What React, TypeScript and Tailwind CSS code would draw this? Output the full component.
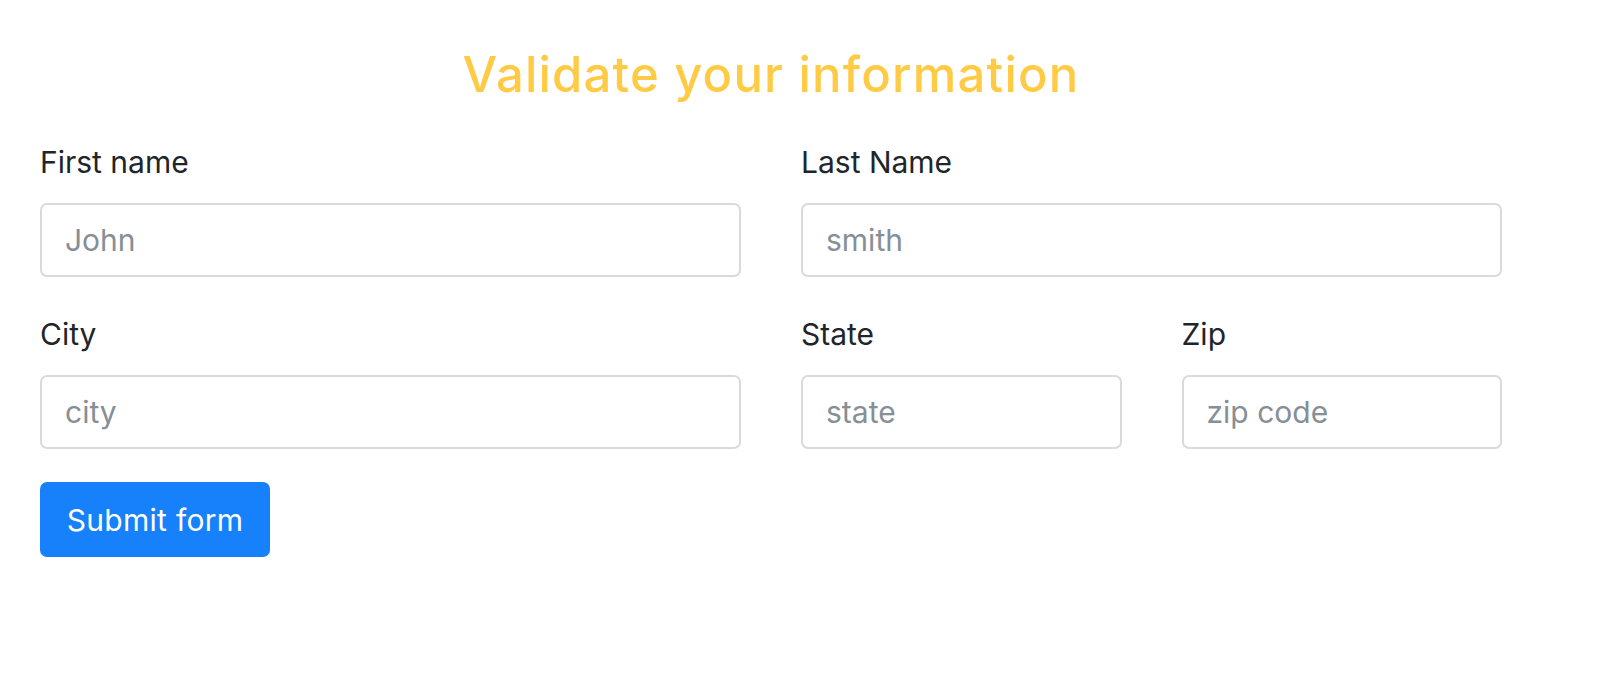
function Field({
  label,
  placeholder,
  span,
}: {
  label: string;
  placeholder: string;
  span: string;
}) {
  return (
    <div className={span}>
      <label className="block text-[30px] leading-[45px] text-[#212529] mb-[18px]">{label}</label>
      <input
        type="text"
        placeholder={placeholder}
        className="block w-full h-[74px] px-[23px] text-[30px] text-[#495057] placeholder:text-[#868e96] bg-white border-2 border-[#dadada] rounded-[7px] outline-none"
      />
    </div>
  );
}

export default function App() {
  return (
    <div className="min-h-screen bg-white font-['Inter',sans-serif]">
      <div className="w-[1522px] ml-[10px] px-[30px] pt-[46px]">
        <h2 className="text-center text-[49px] leading-[58px] font-medium tracking-[1.2px] text-[#ffca44]">
          Validate your information
        </h2>

        <form className="mt-[36px]" onSubmit={(e) => e.preventDefault()}>
          <div className="grid grid-cols-4 gap-x-[60px] gap-y-[35px]">
            <Field label="First name" placeholder="John" span="col-span-2" />
            <Field label="Last Name" placeholder="smith" span="col-span-2" />
            <Field label="City" placeholder="city" span="col-span-2" />
            <Field label="State" placeholder="state" span="col-span-1" />
            <Field label="Zip" placeholder="zip code" span="col-span-1" />
          </div>

          <button
            type="submit"
            className="mt-[33px] h-[75px] w-[230px] rounded-[7px] bg-[#1780fb] text-white text-[30px] leading-none tracking-[0.3px]"
          >
            Submit form
          </button>
        </form>
      </div>
    </div>
  );
}
